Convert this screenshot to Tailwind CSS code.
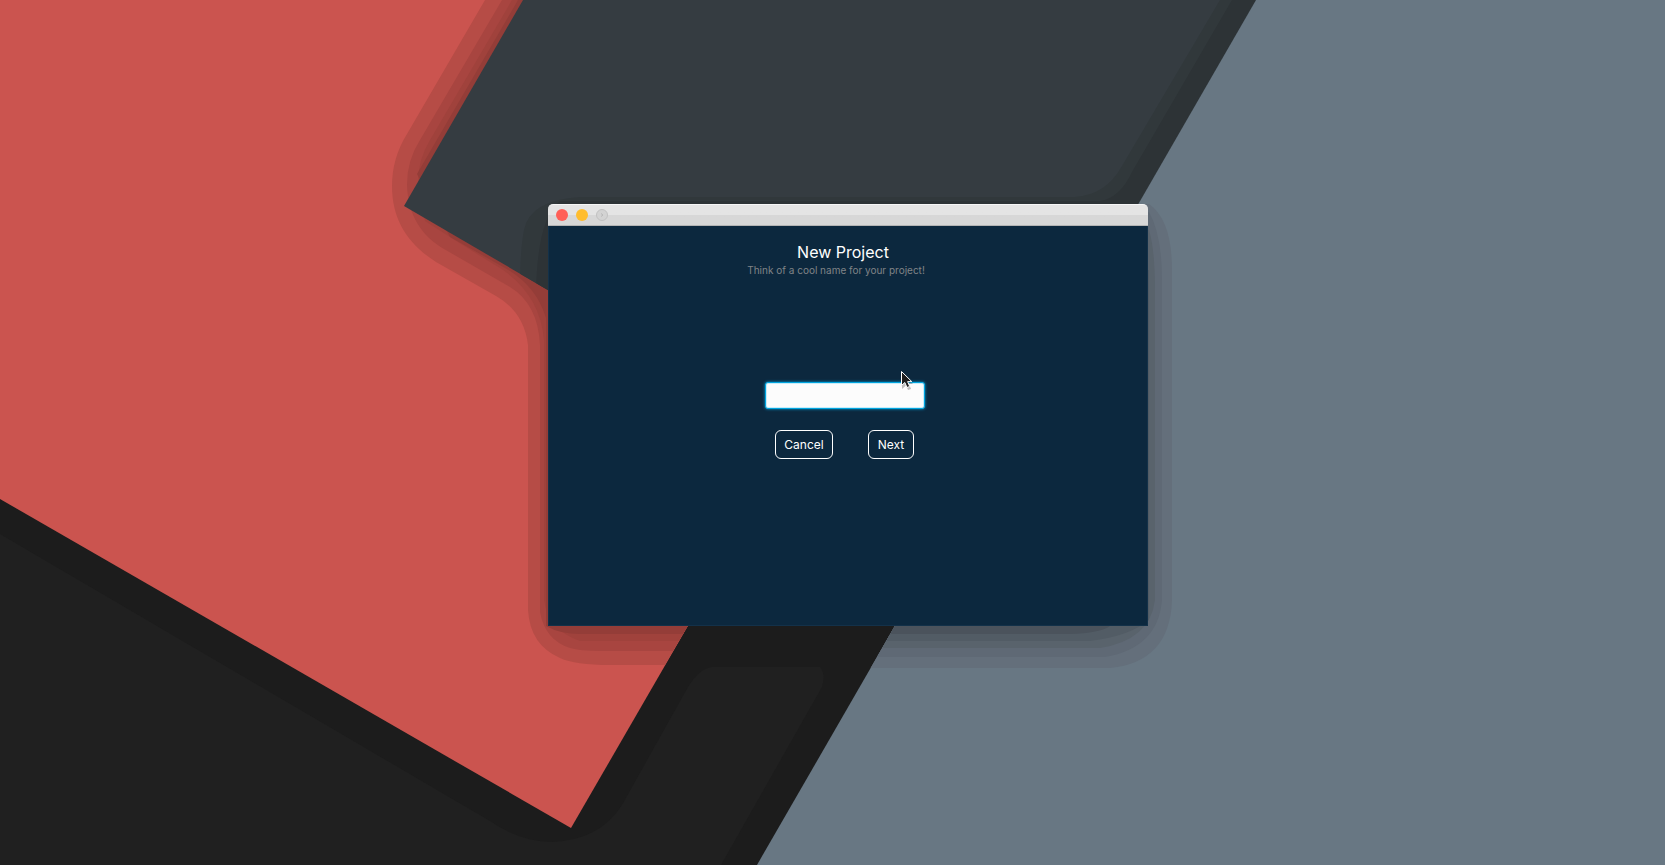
<!DOCTYPE html>
<html lang="en">
<head>
<meta charset="utf-8">
<meta name="viewport" content="width=device-width, initial-scale=1">
<title>New Project</title>
<script src="https://cdn.jsdelivr.net/npm/@tailwindcss/browser@4"></script>
</head>
<body class="relative flex min-h-screen items-start justify-center overflow-hidden bg-[#202020] pt-[204px] pl-[31px] font-['Inter',sans-serif]">
  <!-- Desktop wallpaper: overlapping sheets with stepped shadows -->
  <svg class="absolute inset-0 -z-10 h-full w-full" viewBox="0 0 1665 865" preserveAspectRatio="xMidYMid slice" aria-hidden="true">
    <defs>
      <clipPath id="red"><path d="M0 0H700V605L571 828L0 499Z"/></clipPath>
      <clipPath id="steel"><path d="M1256 0H1665V865H757Z"/></clipPath>
      <clipPath id="slate"><path d="M523 0H1256L1040 374H692L404 206Z"/></clipPath>
    </defs>
    <rect width="1665" height="865" fill="#1c1c1c"/>
    <path fill="#202020" d="M0 534L490 821Q520 842 552 842Q600 840 622 805L688 687Q700 668 712 667H820Q826 674 822 687L721 865H0Z"/>
    <path fill="#cb544f" d="M0 0H700V605L571 828L0 499Z"/>
    <g clip-path="url(#red)">
      <path fill="#b64c46" d="M485 0L407 134Q392 158 392 186C392 220 408 244 436 262L496 296Q524 312 528 345V610Q530 645 560 658Q575 665 610 665H665L700 605V0Z"/>
      <path fill="#a84540" d="M502 0L420 140Q407 160 407 185C408 216 422 236 444 249L510 287Q538 304 540 345V612Q545 640 570 648Q580 651 600 651H673L700 605V0Z"/>
      <path fill="#a0423c" d="M512 0L430 140Q418 160 418 182L425 221Q470 250 500 268Q540 294 544 340V600Q548 630 580 641H679L700 605V0Z"/>
      <path fill="#943d38" d="M518 0L417 174L450 237L505 268Q536 285 546 318V626Q560 634 580 634H683L700 605V0Z"/>
    </g>
    <path fill="#353c41" d="M523 0H1256L1040 374H692L404 206Z"/>
    <g clip-path="url(#slate)">
      <path fill="#31383b" d="M1220 0L1122 166Q1106 195 1075 197H580Q530 200 524 230Q520 250 520 290H1256V0Z"/>
      <path fill="#2d3336" d="M1232 0L1132 172Q1120 198 1100 201H560Q536 220 536 300H1256V0Z"/>
    </g>
    <path fill="#687783" d="M1256 0H1665V865H757Z"/>
    <g clip-path="url(#steel)">
      <path fill="#646f7b" d="M1130 204H1149Q1172 220 1172 270V600Q1170 662 1110 668H840V204Z"/>
      <path fill="#5f6975" d="M1130 212H1149Q1162 235 1162 280V600Q1158 648 1105 657H840V212Z"/>
      <path fill="#59636c" d="M1130 230H1149Q1155 250 1155 290V600Q1150 640 1100 648H840V230Z"/>
      <path fill="#525c65" d="M1149 270V620Q1130 636 1090 641H840V270Z"/>
      <path fill="#4b535c" d="M1110 626Q1100 633 1070 634H840V626Z"/>
    </g>
  </svg>

  <main class="relative w-[600px] shrink-0">
    <header class="flex h-[22px] items-center gap-2 rounded-t-[5px] border-t border-b border-t-[#f6f6f6] border-b-[#b4b4b4] bg-linear-to-b from-[#e4e4e4] from-50% to-[#d7d7d7] to-50% px-2">
      <button type="button" aria-label="Close" class="size-3 rounded-full bg-[#ff5f57]"></button>
      <button type="button" aria-label="Minimize" class="size-3 rounded-full bg-[#ffbd2e]"></button>
      <button type="button" aria-label="Zoom" disabled class="flex size-3 items-center justify-center rounded-full border border-[#c2c2c2] bg-[#d3d3d3]">
        <svg class="size-1" viewBox="0 0 4 4" fill="none" stroke="#b8b8b8" aria-hidden="true"><path d="M1 0.5L3 2L1 3.5"/></svg>
      </button>
    </header>
    <form class="flex h-[400px] flex-col items-center border border-t-0 border-[#133149] bg-[#0c283e] pt-4 text-white">
      <h1 class="mr-[10px] text-[16px] leading-5">New Project</h1>
      <p class="mr-[24px] text-[10px] leading-4 text-[#808487]">Think of a cool name for your project!</p>
      <input type="text" aria-label="Project name" class="mt-[104px] mr-[6px] h-[27px] w-[160px] rounded-[3px] border border-[#00a5e0] bg-[#fcfcfc] px-2 text-sm text-black shadow-[inset_0_0_0_1px_#c8edf9,0_0_3px_#00a5e0] outline-none">
      <div class="mt-[21px] mr-[7px] flex gap-[35px]">
        <button type="button" class="h-[29px] w-[58px] rounded-[6px] border border-white text-[12px]">Cancel</button>
        <button type="submit" class="h-[29px] w-[46px] rounded-[6px] border border-white text-[12px]">Next</button>
      </div>
    </form>
    <svg class="pointer-events-none absolute top-[166px] left-[352px] h-[22px] w-[14px]" viewBox="0 0 14 22" aria-hidden="true">
      <path d="M2 3V19L6 15.500L8 20L11 19L9 14H13Z" fill="#000" opacity=".25"/>
      <path d="M1.500 1.500V15.500L4.800 12.500L7 17.500L9.700 16.400L7.600 11.600H11.800Z" fill="#1c1c1c" stroke="#fff"/>
    </svg>
  </main>
</body>
</html>
